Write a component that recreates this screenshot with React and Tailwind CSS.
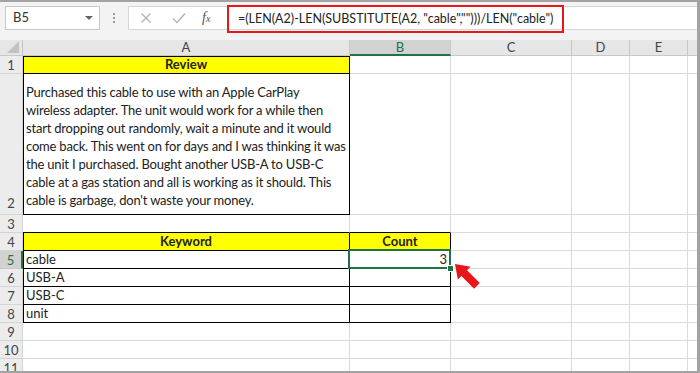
import React from "react";

const font = { fontFamily: "Lato, 'Open Sans', sans-serif" };

function RowHdr({ n, sel, tall }) {
  return (
    <div
      className={
        "flex justify-center border-b border-r text-[13px] leading-[16px] " +
        (tall ? "items-end pb-[3px] " : "items-center ") +
        (sel
          ? "bg-[#d2d2d2] text-[#217346] border-b-[#c8c8c8] border-r-2 border-r-[#217346]"
          : "bg-[#ececec] text-[#444] border-[#d4d4d4]")
      }
    >
      {n}
    </div>
  );
}

function G({ children, className = "" }) {
  return (
    <div className={"border-r border-b border-[#dadada] " + className}>{children}</div>
  );
}

export default function App() {
  const reviewLines = [
    "Purchased this cable to use with an Apple CarPlay",
    "wireless adapter. The unit would work for a while then",
    "start dropping out randomly, wait a minute and it would",
    "come back. This went on for days and I was thinking it was",
    "the unit I purchased. Bought another USB-A to USB-C",
    "cable at a gas station and all is working as it should. This",
    "cable is garbage, don't waste your money.",
  ];
  const kw = ["USB-A", "USB-C", "unit"];
  return (
    <div
      className="relative w-[700px] h-[373px] overflow-hidden border-t-2 border-r-[3px] border-b-2 border-[#a3a3a3] bg-white flex flex-col text-[#222]"
      style={font}
    >
      {/* formula toolbar */}
      <div className="h-[38px] shrink-0 bg-[#f3f3f3] flex items-start pt-[4px] pl-[5px]">
        <div className="w-[95px] h-[24px] bg-white border border-[#c9c9c9] flex items-center justify-between pl-[7px] pr-[6px] text-[13px] text-[#333]">
          <span>B5</span>
          <span className="w-0 h-0 border-l-[4px] border-r-[4px] border-t-[4px] border-l-transparent border-r-transparent border-t-[#666]" />
        </div>
        <div className="w-[28px] h-[24px] flex flex-col items-center justify-center gap-[2px]">
          <span className="w-[2px] h-[2px] bg-[#9a9a9a]" />
          <span className="w-[2px] h-[2px] bg-[#9a9a9a]" />
          <span className="w-[2px] h-[2px] bg-[#9a9a9a]" />
        </div>
        <div className="w-[101px] h-[24px] bg-white border border-[#d6d6d6] border-r-0 flex items-center pl-[11px]">
          <svg width="12" height="12" viewBox="0 0 12 12">
            <path d="M1.5 1.5 L10.5 10.5 M10.5 1.5 L1.5 10.5" stroke="#b3b3b3" strokeWidth="1.3" fill="none" />
          </svg>
          <svg width="14" height="12" viewBox="0 0 14 12" className="ml-[20px]">
            <path d="M1 6.5 L5 10.5 L13 1.5" stroke="#b3b3b3" strokeWidth="1.4" fill="none" />
          </svg>
          <span
            className="ml-[16px] text-[14px] italic text-[#555] leading-none"
            style={{ fontFamily: "'Liberation Serif', serif" }}
          >
            f<span className="text-[10px]">x</span>
          </span>
        </div>
        <div className="flex-1 h-[24px] bg-white border-y border-[#d6d6d6] relative -ml-px">
          <div className="absolute -left-px -top-[2px] w-[337px] h-[28px] border-2 border-[#e8151b] flex items-center pl-[9px] text-[12.5px] text-[#222] whitespace-nowrap">
            =(LEN(A2)-LEN(SUBSTITUTE(A2, "cable","")))/LEN("cable")
          </div>
        </div>
      </div>

      {/* grid */}
      <div className="flex-1 overflow-hidden">
        <div className="grid grid-cols-[23px_327px_101px_121px_58px_58px_1fr] grid-rows-[16px_18px_141px_18px_18px_18px_18px_18px_18px_18px_18px_18px] text-[13px]">
          {/* header row */}
          <div className="bg-[#e6e6e6] border-r border-b border-[#c8c8c8] relative">
            <svg width="12" height="12" className="absolute right-[3px] bottom-[2px]" viewBox="0 0 12 12">
              <polygon points="12,0 12,12 0,12" fill="#c2c2c2" />
            </svg>
          </div>
          <div className="bg-[#e6e6e6] border-r border-b border-[#c8c8c8] flex items-center justify-center text-[13px] leading-none text-[#444]">A</div>
          <div className="bg-[#d2d2d2] border-r border-r-[#c8c8c8] border-b-2 border-b-[#217346] flex items-center justify-center text-[13px] leading-none text-[#217346]">B</div>
          <div className="bg-[#e6e6e6] border-r border-b border-[#c8c8c8] flex items-center justify-center text-[13px] leading-none text-[#444]">C</div>
          <div className="bg-[#e6e6e6] border-r border-b border-[#c8c8c8] flex items-center justify-center text-[13px] leading-none text-[#444]">D</div>
          <div className="bg-[#e6e6e6] border-r border-b border-[#c8c8c8] flex items-center justify-center text-[13px] leading-none text-[#444]">E</div>
          <div className="bg-[#e6e6e6] border-b border-[#c8c8c8]" />

          {/* row 1 */}
          <RowHdr n="1" />
          <div className="bg-[#ffff00] border-r border-b border-black shadow-[inset_1px_1px_0_#000] flex items-center justify-center font-bold">Review</div>
          <G /><G /><G /><G /><div className="border-b border-[#dadada]" />

          {/* row 2 */}
          <RowHdr n="2" tall />
          <div className="border-r border-b border-black shadow-[inset_1px_0_0_#000] flex flex-col justify-end pb-[5px] pl-[3px] leading-[18px] whitespace-nowrap tracking-[-0.2px]">
            {reviewLines.map((l, i) => (
              <div key={i}>{l}</div>
            ))}
          </div>
          <G /><G /><G /><G /><div className="border-b border-[#dadada]" />

          {/* row 3 */}
          <RowHdr n="3" />
          <div className="border-r border-b border-r-[#dadada] border-b-black" />
          <div className="border-r border-b border-r-[#dadada] border-b-black" />
          <G /><G /><G /><div className="border-b border-[#dadada]" />

          {/* row 4 */}
          <RowHdr n="4" />
          <div className="bg-[#ffff00] border-r border-b border-black shadow-[inset_1px_0_0_#000] flex items-center justify-center font-bold">Keyword</div>
          <div className="bg-[#ffff00] border-r border-b border-black flex items-center justify-center font-bold">Count</div>
          <G /><G /><G /><div className="border-b border-[#dadada]" />

          {/* row 5 */}
          <RowHdr n="5" sel />
          <div className="border-r border-b border-black shadow-[inset_1px_0_0_#000] flex items-center pl-[3px]">cable</div>
          <div className="relative border-r border-b border-black flex items-center justify-end pr-[3px]">
            3
            <div className="absolute -left-[2px] -top-[2px] -right-px -bottom-px border-2 border-[#217346]" />
            <div className="absolute -right-[4px] -bottom-[4px] w-[7px] h-[7px] bg-[#217346] border border-white" />
          </div>
          <G /><G /><G /><div className="border-b border-[#dadada]" />

          {kw.map((k, i) => (
            <React.Fragment key={k}>
              <RowHdr n={String(i + 6)} />
              <div className="border-r border-b border-black shadow-[inset_1px_0_0_#000] flex items-center pl-[3px]">{k}</div>
              <div className="border-r border-b border-black" />
              <G /><G /><G /><div className="border-b border-[#dadada]" />
            </React.Fragment>
          ))}

          {["9", "10", "11"].map((n) => (
            <React.Fragment key={n}>
              <RowHdr n={n} />
              <G /><G /><G /><G /><G /><div className="border-b border-[#dadada]" />
            </React.Fragment>
          ))}
        </div>
      </div>

      {/* red arrow */}
      <svg className="absolute left-0 top-0 pointer-events-none" width="700" height="373">
        <g transform="translate(455 262) rotate(45)">
          <polygon points="0,0 13,-9 13,-4 31,-4 31,4 13,4 13,9" fill="#e8151b" />
        </g>
      </svg>
    </div>
  );
}
